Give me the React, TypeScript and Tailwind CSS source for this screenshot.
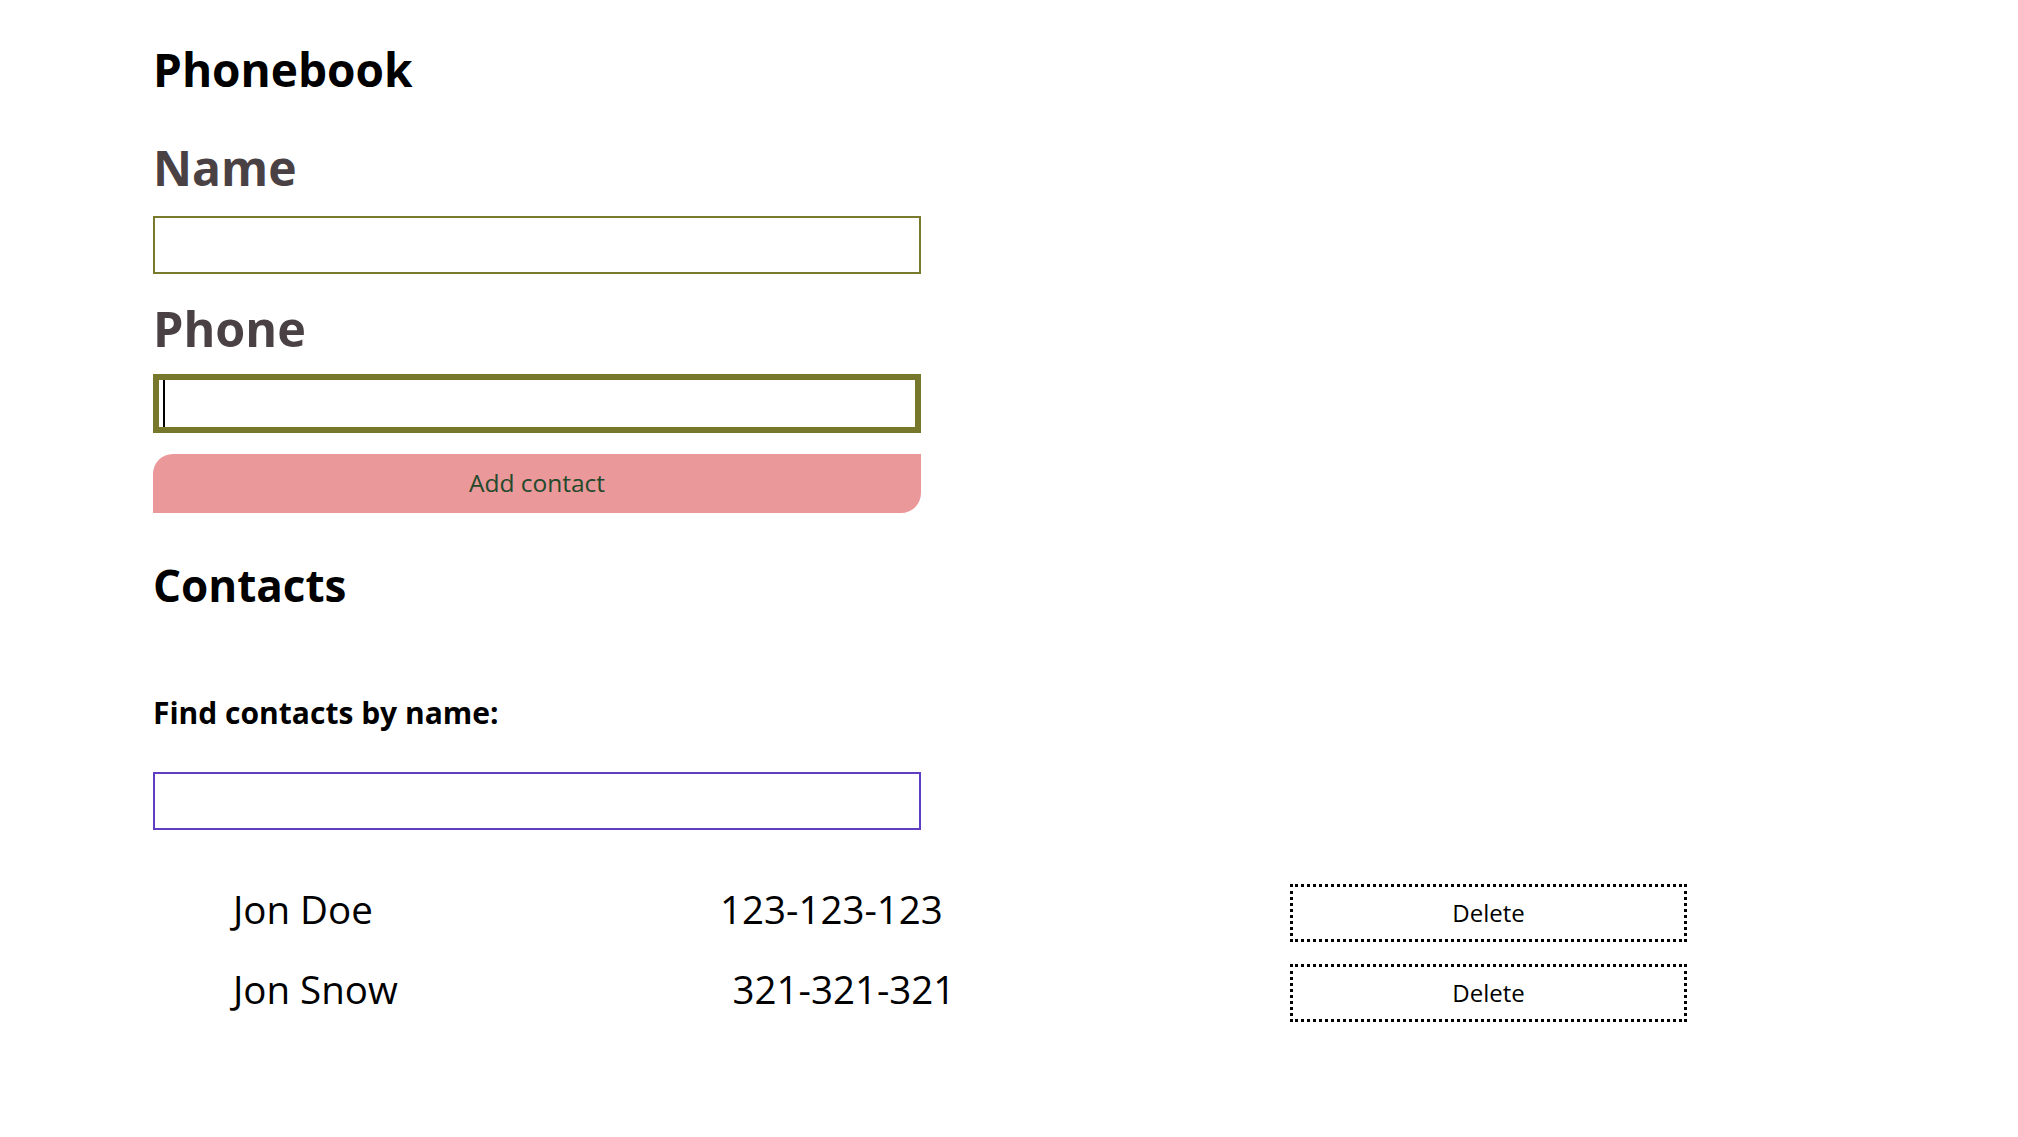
import React, { useState } from 'react';

type Contact = {
  id: string;
  name: string;
  number: string;
};

const initialContacts: Contact[] = [
  { id: 'id-1', name: 'Jon Doe', number: '123-123-123' },
  { id: 'id-2', name: 'Jon Snow', number: '321-321-321' },
];

function ContactListItem(props: { contact: Contact; onDelete: (id: string) => void }) {
  return (
    <li className="flex h-[58px] w-[1454px] items-center justify-between">
      <span className="mb-[9px] text-[38.5px] leading-[48px] text-black">{props.contact.name}</span>
      <span className="mb-[9px] text-[38.5px] leading-[48px] text-black">{props.contact.number}</span>
      <button
        type="button"
        className="h-[58px] w-[397px] border-[3px] border-dotted border-black bg-white text-[24px] text-black"
        onClick={() => props.onDelete(props.contact.id)}
      >
        Delete
      </button>
    </li>
  );
}

export default function App() {
  const [contacts, setContacts] = useState<Contact[]>(initialContacts);
  const [name, setName] = useState('');
  const [number, setNumber] = useState('');
  const [filter, setFilter] = useState('');

  const visible = contacts.filter((c) => c.name.toLowerCase().includes(filter.toLowerCase()));

  return (
    <div className="min-h-screen bg-white pl-[153px] pt-[39px] font-['Open_Sans',sans-serif]">
      {/* Form */}
      <h1 className="text-[46px] font-bold leading-[60px] text-black">Phonebook</h1>
      <form
        className="flex w-[768px] flex-col"
        onSubmit={(e) => {
          e.preventDefault();
          if (!name) return;
          setContacts([...contacts, { id: String(Date.now()), name, number }]);
          setName('');
          setNumber('');
        }}
      >
        <label className="mt-[45px] text-[48px] font-bold leading-[48px] text-[#4a4144]">Name</label>
        <input
          className="mt-[24px] h-[58px] w-full border-2 border-[#7a7a2e] px-1 text-[24px] outline-none"
          value={name}
          onChange={(e) => setName(e.target.value)}
        />
        <label className="mt-[30px] text-[48.5px] font-bold leading-[48px] text-[#4a4144]">Phone</label>
        <div className="relative mt-[22px]">
          <input
            className="h-[59px] w-full border-[6px] border-[#78782c] px-1 text-[24px] caret-transparent outline-none"
            value={number}
            onChange={(e) => setNumber(e.target.value)}
          />
          {/* caret */}
          <div className="absolute left-[10px] top-[6px] h-[47px] w-[2px] bg-black" />
        </div>
        <button
          type="submit"
          className="mt-[21px] h-[59px] w-full rounded-br-[20px] rounded-tl-[20px] bg-[#ea9899] text-[24.5px] text-[#23492c]"
        >
          Add contact
        </button>
      </form>

      {/* Contacts */}
      <h2 className="mt-[42px] text-[44px] font-bold leading-[60px] text-black">Contacts</h2>
      <label className="mt-[80px] block text-[30px] font-bold leading-[36px] text-black">
        Find contacts by name:
      </label>
      <input
        className="mt-[41px] h-[58px] w-[768px] border-2 border-[#5f3ec2] px-1 text-[24px] outline-none"
        value={filter}
        onChange={(e) => setFilter(e.target.value)}
      />
      <ul className="mt-[54px] flex flex-col gap-[22px] pl-[80px]">
        {visible.map((c) => (
          <ContactListItem key={c.id} contact={c} onDelete={(id) => setContacts(contacts.filter((x) => x.id !== id))} />
        ))}
      </ul>
    </div>
  );
}
